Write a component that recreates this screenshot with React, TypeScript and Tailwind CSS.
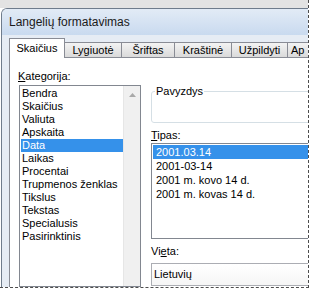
import React from "react";

const categories = [
  "Bendra",
  "Skaičius",
  "Valiuta",
  "Apskaita",
  "Data",
  "Laikas",
  "Procentai",
  "Trupmenos ženklas",
  "Tikslus",
  "Tekstas",
  "Specialusis",
  "Pasirinktinis",
];

const types = ["2001.03.14", "2001-03-14", "2001 m. kovo 14 d.", "2001 m. kovas 14 d."];

const tabs = [
  { label: "Lygiuotė", w: "w-[58px] justify-center" },
  { label: "Šriftas", w: "w-[54px] justify-center" },
  { label: "Kraštinė", w: "w-[58px] justify-center" },
  { label: "Užpildyti", w: "w-[57px] justify-center" },
  { label: "Ap", w: "w-[60px] justify-start pl-[3px]" },
];

export default function App() {
  return (
    <div className="w-[311px] h-[289px] bg-white overflow-hidden font-['Liberation_Sans',Arial,sans-serif] text-[11px] text-black leading-[13px]">
      <div className="w-[309px] h-[288px] border-r border-b border-dashed border-[#4d4d4d] flex flex-col overflow-hidden">
        <div className="h-[8px] shrink-0 bg-[#e3e3e3]" />
        <div className="flex-1 min-h-0 flex flex-col ml-[1px] border-l border-t border-[#6f7c8c] rounded-tl-[6px] bg-[#e6ecf4] overflow-hidden">
          {/* title bar */}
          <div className="h-[26px] shrink-0 flex items-center pl-[7px] text-[12px] text-[#1a1a1a] bg-gradient-to-b from-[#e2ebf6] to-[#c9daef]">
            Langelių formatavimas
          </div>
          {/* dialog body */}
          <div className="flex-1 min-h-0 flex flex-col pl-[7px] pt-[3px]">
            {/* tab strip */}
            <div className="h-[19px] shrink-0 flex items-end">
              <div className="relative z-10 -mb-[1px] h-[20px] w-[56px] shrink-0 bg-white border-l border-t border-r border-[#898c95] flex items-center justify-center pb-[1px]">
                Skaičius
              </div>
              {tabs.map((t) => (
                <div
                  key={t.label}
                  className={`h-[15px] ${t.w} shrink-0 -ml-[1px] first:ml-0 border border-b-0 border-[#898c95] bg-gradient-to-b from-[#f3f3f3] to-[#dadada] flex items-center`}
                >
                  {t.label}
                </div>
              ))}
            </div>
            {/* tab page */}
            <div className="flex-1 min-h-0 bg-white border-l border-t border-[#898c95] flex gap-[10px] pl-[8px]">
              {/* left column */}
              <div className="w-[123px] shrink-0 flex flex-col pt-[12px]">
                <div className="h-[13px]">
                  <span className="underline underline-offset-[1px]">K</span>ategorija:
                </div>
                <div className="mt-[2px] ml-[1px] h-[220px] border border-[#828790] flex">
                  <div className="flex-1 flex flex-col pt-[1px] pl-[1px]">
                    {categories.map((c) => (
                      <div
                        key={c}
                        className={`h-[13px] pl-[1px] leading-[13px] ${
                          c === "Data" ? "bg-[#3591ea] text-white" : ""
                        }`}
                      >
                        {c}
                      </div>
                    ))}
                  </div>
                  <div className="w-[17px] shrink-0 bg-[#f0f0f0] border-l border-[#e6e6e6] flex flex-col">
                    <div className="h-[17px] flex items-center justify-center">
                      <svg width="7" height="4" viewBox="0 0 7 4">
                        <path d="M0 4 L3.5 0 L7 4 Z" fill="#a9a9a9" />
                      </svg>
                    </div>
                  </div>
                </div>
              </div>
              {/* right column */}
              <div className="w-[180px] shrink-0 flex flex-col pt-[33px]">
                <div className="relative h-[32px] border border-[#d5dfe5] rounded-[3px]">
                  <span className="absolute -top-[7px] left-[3px] bg-white px-[1px] leading-[13px]">Pavyzdys</span>
                </div>
                <div className="mt-[6px] h-[13px]">
                  <span className="underline underline-offset-[1px]">T</span>ipas:
                </div>
                <div className="mt-[1px] h-[96px] border border-[#828790] flex flex-col pt-[1px] pl-[1px]">
                  {types.map((t, i) => (
                    <div
                      key={t}
                      className={`h-[14px] pl-[3px] leading-[14px] ${
                        i === 0 ? "bg-[#3591ea] text-white" : ""
                      }`}
                    >
                      {t}
                    </div>
                  ))}
                </div>
                <div className="mt-[6px] h-[13px]">
                  Vi<span className="underline underline-offset-[1px]">e</span>ta:
                </div>
                <div className="mt-[5px] h-[23px] border border-[#abadb3] bg-gradient-to-b from-white to-[#f6f6f6] flex items-center pl-[2px]">
                  Lietuvių
                </div>
              </div>
            </div>
          </div>
        </div>
      </div>
    </div>
  );
}
